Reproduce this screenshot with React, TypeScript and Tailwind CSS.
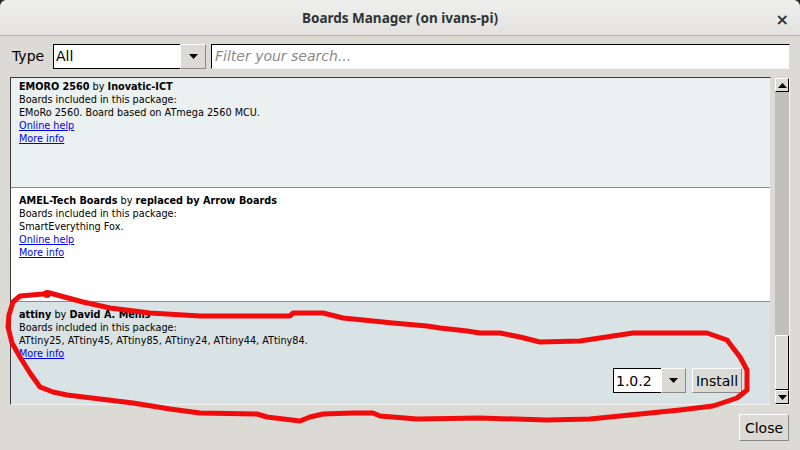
import React from "react";

const font = { fontFamily: '"DejaVu Sans", sans-serif' };

const Arrow = ({ down = true }: { down?: boolean }) => (
  <svg width="9" height="5" viewBox="0 0 9 5">
    {down ? <path d="M0 0h9L4.5 5z" fill="#000" /> : <path d="M0 5h9L4.5 0z" fill="#000" />}
  </svg>
);

const Link = ({ children }: { children: React.ReactNode }) => (
  <div>
    <span className="text-[#0000ee] underline">{children}</span>
  </div>
);

const redPath =
  "M50 293 L43 294 L20 296 L13 302 L9 315 L8 327 L12 343 L20 357 L30 373 L40 387 L53 392 L67 395 L100 399 L133 403 L170 409 L200 413 L257 414 L267 417 L300 421 L310 417 L323 414 L353 413 L373 413 L380 416 L417 419 L480 418 L547 420 L590 419 L630 415 L680 410 L713 406 L737 398 L747 390 L747 370 L740 357 L727 340 L707 333 L633 333 L613 336 L580 341 L540 342 L520 337 L500 333 L480 333 L467 331 L440 328 L427 326 L393 323 L373 321 L343 318 L323 313 L293 313 L290 316 L200 316 L150 313 L110 308 L83 302 L57 295 Z";

export default function App() {
  return (
    <div className="w-[800px] h-[450px] bg-[#2b2b2b] overflow-hidden" style={font}>
      <div className="relative w-[800px] h-[450px] bg-[#dcdad5] rounded-t-[7px] flex flex-col overflow-hidden">
        {/* title bar */}
        <div className="h-[36px] shrink-0 flex items-center justify-center relative bg-gradient-to-b from-[#efefee] to-[#e3e2df] border-b border-[#b4b3ae]">
          <span className="text-[13.5px] font-bold text-[#2e3436] mt-[1px]" style={{ fontFamily: '"Noto Sans", sans-serif' }}>
            Boards Manager (on ivans-pi)
          </span>
          <span className="absolute right-[11px] top-[8px] text-[16px] font-bold text-[#2e3436]">×</span>
        </div>

        {/* filter row */}
        <div className="flex items-center h-[25px] mt-[8px] pl-[12px] pr-[10px]">
          <span className="text-[14px] text-[#000] w-[41px]">Type</span>
          <div className="flex h-[25px] w-[153px]">
            <div className="flex-1 bg-white border border-[#000] border-r-0 flex items-center pl-[2px] text-[14px]">All</div>
            <div className="w-[26px] bg-[#dcdad5] border border-[#8a8985] border-t-white border-l-white flex items-center justify-center">
              <Arrow />
            </div>
          </div>
          <div className="ml-[5px] flex-1 h-[25px] bg-white border border-[#000] border-r-[#dcdad5] border-b-[#f4f4f2] flex items-center pl-[3px] text-[14px] italic text-[#8a8a8a]">
            Filter your search...
          </div>
        </div>

        {/* list + scrollbar */}
        <div className="flex mt-[8px] ml-[10px] mr-[10px] h-[328px]">
          <div className="flex-1 flex flex-col border border-[#3a3a3a] border-r-[#dcdad5] border-b-[#f2f2f0] overflow-hidden text-[9.7px] leading-[13px] text-[#000] mr-[3px]">
            <div className="h-[110px] shrink-0 bg-[#ebf0f0] border-b border-[#8c8c8c] pl-[8px] pt-[2px]">
              <div><b>EMORO 2560</b> by <b>Inovatic-ICT</b></div>
              <div>Boards included in this package:</div>
              <div>EMoRo 2560. Board based on ATmega 2560 MCU.</div>
              <Link>Online help</Link>
              <Link>More info</Link>
            </div>
            <div className="h-[114px] shrink-0 bg-white border-b border-[#8c8c8c] pl-[8px] pt-[6px]">
              <div><b>AMEL-Tech Boards</b> by <b>replaced by Arrow Boards</b></div>
              <div>Boards included in this package:</div>
              <div>SmartEverything Fox.</div>
              <Link>Online help</Link>
              <Link>More info</Link>
            </div>
            <div className="flex-1 bg-[#d9e2e4] pl-[8px] pt-[6px] flex flex-col">
              <div><b>attiny</b> by <b>David A. Mellis</b></div>
              <div>Boards included in this package:</div>
              <div>ATtiny25, ATtiny45, ATtiny85, ATtiny24, ATtiny44, ATtiny84.</div>
              <Link>More info</Link>
              <div className="flex justify-end items-center mt-[8px] mr-[28px] gap-[6px]">
                <div className="flex h-[25px]">
                  <div className="w-[48px] bg-white border border-[#000] border-r-0 flex items-center pl-[2px] text-[14px] leading-none">1.0.2</div>
                  <div className="w-[25px] bg-[#dcdad5] border border-[#8a8985] border-t-white border-l-white flex items-center justify-center">
                    <Arrow />
                  </div>
                </div>
                <div className="h-[25px] w-[50px] bg-[#dcdad5] border border-[#8a8985] border-t-white border-l-white flex items-center justify-center text-[14px] leading-none">
                  Install
                </div>
              </div>
            </div>
          </div>
          {/* scrollbar */}
          <div className="w-[16px] flex flex-col border border-[#dcdad5] border-r-[#f4f4f2] border-b-[#f4f4f2]">
            <div className="h-[14px] bg-[#dcdad5] border border-white border-r-[#000] border-b-[#000] flex items-center justify-center">
              <Arrow down={false} />
            </div>
            <div className="flex-1 bg-[#c1bfb9]" />
            <div className="h-[55px] bg-[#dcdad5] border border-white border-r-[#000] border-b-[#000]" />
            <div className="h-[14px] bg-[#dcdad5] border border-white border-r-[#000] border-b-[#000] flex items-center justify-center">
              <Arrow />
            </div>
          </div>
        </div>

        {/* bottom */}
        <div className="flex justify-end mt-[9px] pr-[11px]">
          <div className="h-[27px] w-[50px] bg-[#dcdad5] border border-[#8a8985] border-t-white border-l-white flex items-center justify-center text-[14px] leading-none">
            Close
          </div>
        </div>

        <svg className="absolute inset-0 pointer-events-none" width="800" height="450">
          <path d={redPath} fill="none" stroke="#f00c0c" strokeWidth="5" strokeLinejoin="round" />
          <circle cx="47" cy="294" r="4" fill="#f00c0c" />
        </svg>
      </div>
    </div>
  );
}
